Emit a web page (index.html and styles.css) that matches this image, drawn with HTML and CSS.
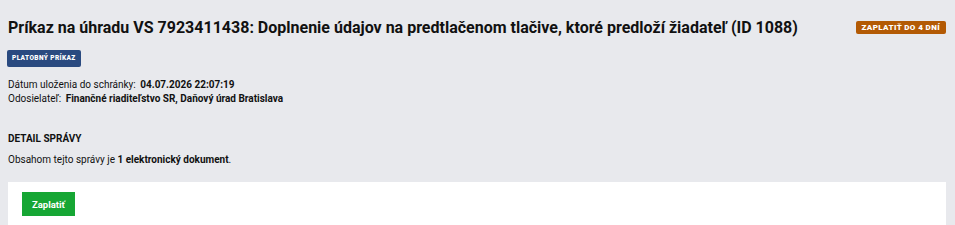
FILE: index.html
```html
<!DOCTYPE html>
<html lang="sk">

<head>
    <meta charset="UTF-8">
    <title>Príkaz na úhradu</title>
    <link rel="stylesheet" href="styles.css">
</head>

<body>
    <div class="page">
        <div class="title-row">
            <h1>Príkaz na úhradu VS 7923411438: Doplnenie údajov na predtlačenom tlačive, ktoré predloží žiadateľ (ID 1088)</h1>
            <span class="badge badge-due">Zaplatiť do 4 dní</span>
        </div>

        <div class="tags">
            <span class="badge badge-type">Platobný príkaz</span>
        </div>

        <div class="meta">
            <div>Dátum uloženia do schránky: <strong>04.07.2026 22:07:19</strong></div>
            <div>Odosielateľ: <strong>Finančné riaditeľstvo SR, Daňový úrad Bratislava</strong></div>
        </div>

        <h2>Detail správy</h2>
        <p class="summary">Obsahom tejto správy je <strong>1 elektronický dokument</strong>.</p>

        <div class="panel">
            <button class="btn-pay">Zaplatiť</button>
        </div>
    </div>
</body>

</html>
```

FILE: styles.css
```css
body {
    margin: 0;
    font-family: Roboto, 'Liberation Sans', sans-serif;
    background: #e8e9ed;
    color: #111;
    font-size: 10px;
}

.page {
    padding: 0 9px 0 8px;
}

.title-row {
    display: flex;
    justify-content: space-between;
    align-items: flex-start;
    padding-top: 18px;
}

h1 {
    margin: 0;
    font-size: 16px;
    font-weight: 700;
    line-height: 20px;
}

.badge {
    display: inline-block;
    color: white;
    font-weight: 900;
    text-transform: uppercase;
    border-radius: 2px;
}

.badge-due {
    background: #b35a04;
    font-size: 8px;
    letter-spacing: 0.4px;
    padding: 0 6px;
    line-height: 13px;
    margin-top: 3px;
    white-space: nowrap;
}

.tags {
    display: flex;
    margin-top: 12px;
}

.badge-type {
    background: #2a4a80;
    font-size: 6.5px;
    letter-spacing: 0.4px;
    padding: 0 5px;
    line-height: 17px;
    margin-left: -1px;
}

.meta {
    margin-top: 11px;
    line-height: 14px;
}

.meta strong {
    margin-left: 2px;
}

h2 {
    margin: 26px 0 0;
    font-size: 10px;
    font-weight: 700;
    text-transform: uppercase;
    line-height: 14px;
}

.summary {
    margin: 7px 0 0;
    line-height: 14px;
}

.panel {
    margin-top: 15px;
    background: white;
    padding: 10px 14px 9px;
}

.btn-pay {
    background: #16a634;
    color: white;
    border: none;
    font-family: inherit;
    font-size: 9.5px;
    font-weight: 700;
    padding: 0 10px;
    height: 24px;
    cursor: pointer;
}
```
